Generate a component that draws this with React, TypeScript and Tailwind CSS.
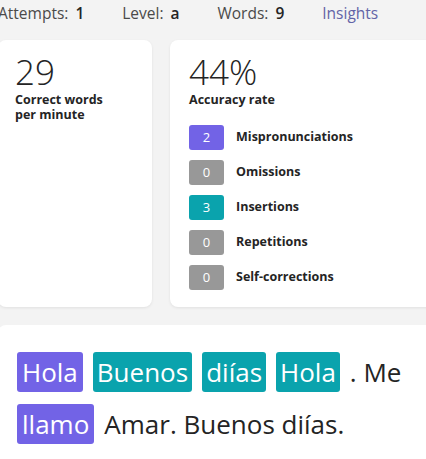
import React from "react";

const stats = [
  { count: 2, label: "Mispronunciations", tone: "bg-[#7263e6]" },
  { count: 0, label: "Omissions", tone: "bg-[#989898]" },
  { count: 3, label: "Insertions", tone: "bg-[#0aa3ad]" },
  { count: 0, label: "Repetitions", tone: "bg-[#989898]" },
  { count: 0, label: "Self-corrections", tone: "bg-[#989898]" },
];

type Word = { text: string; mark?: "miss" | "insert" };

const passage: Word[][] = [
  [
    { text: "Hola", mark: "miss" },
    { text: "Buenos", mark: "insert" },
    { text: "diías", mark: "insert" },
    { text: "Hola", mark: "insert" },
    { text: ". Me" },
  ],
  [{ text: "llamo", mark: "miss" }, { text: "Amar. Buenos diías." }],
];

function Meta({ label, value }: { label: string; value: string }) {
  return (
    <span className="text-[#4a4a4a]">
      {label}
      <span className="ml-[7px] font-semibold text-[#242424]">{value}</span>
    </span>
  );
}

export default function App() {
  return (
    <div
      className="h-[459px] overflow-hidden bg-[#f3f3f3]"
      style={{ fontFamily: '"Open Sans", "Noto Sans", sans-serif' }}
    >
      <div className="-ml-[2px] w-[460px]">
        <div className="flex h-[28px] items-center gap-[38px] text-[15.5px]">
          <Meta label="Attempts:" value="1" />
          <Meta label="Level:" value="a" />
          <Meta label="Words:" value="9" />
          <span className="text-[#6264a7]">Insights</span>
        </div>

        <div className="mt-[12px] flex gap-[18px]">
          <div className="h-[267px] w-[155px] rounded-[8px] bg-white px-[17px] pt-[13px] shadow-[0_1px_3px_rgba(0,0,0,0.08)]">
            <div className="text-[35px] font-light leading-[38px] text-[#242424]">29</div>
            <div className="mt-[1px] text-[12.5px] font-bold leading-[15px] text-[#242424]">
              Correct words
              <br />
              per minute
            </div>
          </div>

          <div className="h-[267px] w-[290px] rounded-[8px] bg-white px-[19px] pt-[13px] shadow-[0_1px_3px_rgba(0,0,0,0.08)]">
            <div className="text-[35px] font-light leading-[38px] text-[#242424]">44%</div>
            <div className="mt-[1px] text-[12.5px] font-bold leading-[15px] text-[#242424]">
              Accuracy rate
            </div>
            <div className="mt-[18px] flex flex-col gap-[10px]">
              {stats.map((s) => (
                <div key={s.label} className="flex items-center gap-[12px]">
                  <span
                    className={`flex h-[25px] w-[35px] items-center justify-center rounded-[3px] text-[13px] text-white ${s.tone}`}
                  >
                    {s.count}
                  </span>
                  <span className="text-[12.5px] font-bold text-[#242424]">{s.label}</span>
                </div>
              ))}
            </div>
          </div>
        </div>

        <div className="mt-[18px] h-[200px] rounded-t-[8px] bg-white px-[19px] pt-[27px]">
          {passage.map((line, i) => (
            <div key={i} className="flex h-[52px] items-start gap-[10px]">
              {line.map((w, j) => (
                <span
                  key={j}
                  className={`h-[40px] rounded-[3px] text-[26px] leading-[40px] ${
                    w.mark === "miss"
                      ? "bg-[#7263e6] px-[5px] text-white"
                      : w.mark === "insert"
                        ? "bg-[#0aa3ad] px-[4px] text-white"
                        : "text-[#242424]"
                  }`}
                >
                  {w.text}
                </span>
              ))}
            </div>
          ))}
        </div>
      </div>
    </div>
  );
}
